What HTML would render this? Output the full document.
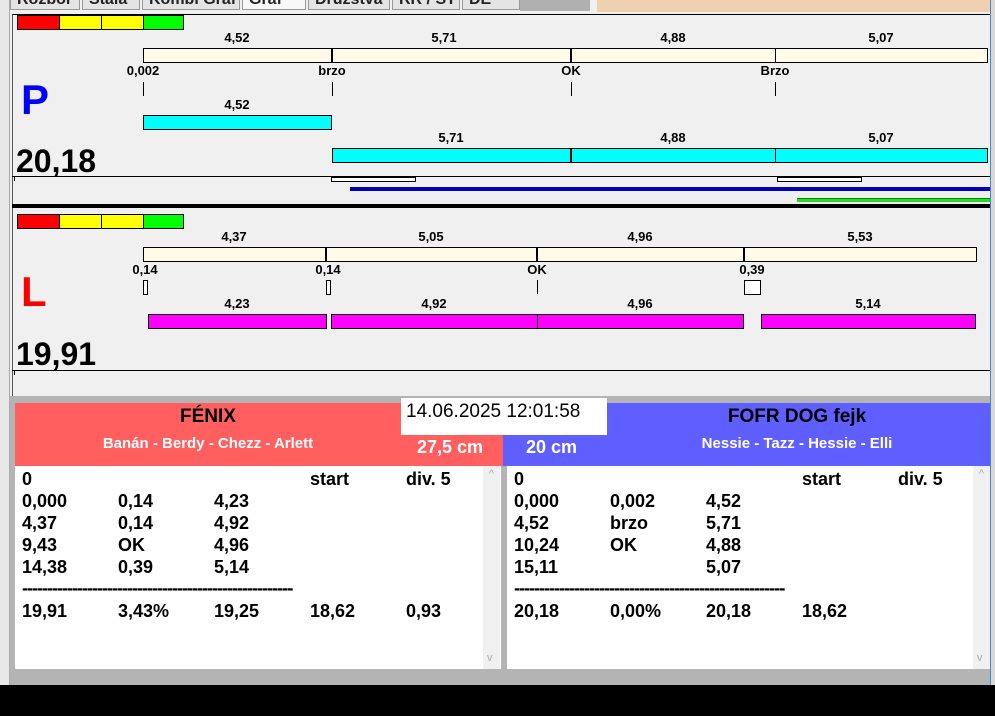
<!DOCTYPE html>
<html><head><meta charset="utf-8"><style>
body{margin:0;width:995px;height:716px;overflow:hidden;background:#f0f0f0;font-family:"Liberation Sans",Arial,sans-serif;position:relative}
div,span{position:absolute;box-sizing:border-box}
.t{font-weight:bold;font-size:13px;color:#000;transform:translateX(-50%);white-space:nowrap;line-height:14px}
.bar{border:1px solid #000}
.cr{background:#fffbe6}
.cy{background:#00ffff}
.mg{background:#ff00ff}
.vl{width:1px;background:#000}
.vl2{width:2px;background:#000}
.tab{top:-10px;height:20px;border:1px solid #999;background:#e4e4e4;font-size:16px;font-weight:bold;color:#222;padding:0 6px;line-height:18px;white-space:nowrap;overflow:hidden}
.row{font-weight:bold;font-size:18px;line-height:20px;color:#000;white-space:nowrap}
.dash{width:271px;overflow:hidden;letter-spacing:-1px}
</style></head><body>
<div style="left:0;top:0;width:10px;height:690px;background:#e8e8e8;border-right:1px solid #aaa"></div>
<div style="left:597px;top:0;width:393px;height:12px;background:#efd0b0"></div>
<div style="left:520px;top:0;width:70px;height:11px;background:#b0b0b0"></div>
<div class="tab" style="left:10px;width:70px">Rozbor</div>
<div class="tab" style="left:82px;width:58px">Stála</div>
<div class="tab" style="left:142px;width:98px">Kombi Graf</div>
<div class="tab" style="left:242px;width:64px;background:#f8f8f8">Graf</div>
<div class="tab" style="left:308px;width:82px">Družstva</div>
<div class="tab" style="left:392px;width:68px">RR / ST</div>
<div class="tab" style="left:462px;width:58px">DE</div>
<div style="left:12px;top:14px;width:978px;height:384px;border-top:1px solid #000;border-left:1px solid #555;background:#f0f0f0"></div>
<div style="left:990px;top:0;width:5px;height:690px;background:#d8d8d8;border-left:1px solid #3a8ad0"></div>

<!-- P section -->
<div class="bar" style="left:17px;top:15px;width:43px;height:15px;background:#f00"></div>
<div class="bar" style="left:59px;top:15px;width:43px;height:15px;background:#ff0"></div>
<div class="bar" style="left:101px;top:15px;width:43px;height:15px;background:#ff0"></div>
<div class="bar" style="left:143px;top:15px;width:41px;height:15px;background:#0f0"></div>
<div class="t" style="left:237px;top:31px">4,52</div><div class="t" style="left:444px;top:31px">5,71</div><div class="t" style="left:673px;top:31px">4,88</div><div class="t" style="left:881px;top:31px">5,07</div>
<div class="bar cr" style="left:143px;top:48px;width:845px;height:15px"></div>
<div class="vl2" style="left:331px;top:48px;height:15px"></div><div class="vl2" style="left:570px;top:48px;height:15px"></div><div class="vl" style="left:775px;top:48px;height:15px"></div>
<div class="t" style="left:143px;top:64px">0,002</div><div class="t" style="left:332px;top:64px">brzo</div><div class="t" style="left:571px;top:64px">OK</div><div class="t" style="left:775px;top:64px">Brzo</div>
<div class="vl" style="left:143px;top:82px;height:14px"></div><div class="vl" style="left:332px;top:82px;height:14px"></div><div class="vl" style="left:571px;top:82px;height:14px"></div><div class="vl" style="left:775px;top:82px;height:14px"></div>
<div style="left:21px;top:76px;font-size:42px;font-weight:bold;color:#0000ff;line-height:48px">P</div>
<div class="t" style="left:237px;top:98px">4,52</div>
<div class="bar cy" style="left:143px;top:115px;width:189px;height:15px"></div>
<div class="t" style="left:451px;top:131px">5,71</div><div class="t" style="left:673px;top:131px">4,88</div><div class="t" style="left:881px;top:131px">5,07</div>
<div class="bar cy" style="left:332px;top:148px;width:656px;height:15px"></div>
<div class="vl2" style="left:570px;top:148px;height:15px"></div><div class="vl" style="left:775px;top:148px;height:15px"></div>
<div style="left:16px;top:143px;font-size:32px;font-weight:bold;line-height:36px">20,18</div>
<div style="left:12px;top:176px;width:978px;height:1px;background:#000"></div>
<div class="vl" style="left:14px;top:177px;height:4px"></div>
<div class="bar" style="left:331px;top:177px;width:85px;height:5px;background:#fff"></div>
<div class="bar" style="left:777px;top:177px;width:85px;height:5px;background:#fff"></div>
<div style="left:350px;top:187px;width:640px;height:4px;background:#0000b8"></div>
<div style="left:797px;top:198px;width:193px;height:4px;background:#22dd22;border-top:1px solid #080"></div>
<div style="left:12px;top:204px;width:978px;height:4px;background:#000"></div>

<!-- L section -->
<div class="bar" style="left:17px;top:214px;width:43px;height:15px;background:#f00"></div>
<div class="bar" style="left:59px;top:214px;width:43px;height:15px;background:#ff0"></div>
<div class="bar" style="left:101px;top:214px;width:43px;height:15px;background:#ff0"></div>
<div class="bar" style="left:143px;top:214px;width:41px;height:15px;background:#0f0"></div>
<div class="t" style="left:234px;top:230px">4,37</div><div class="t" style="left:431px;top:230px">5,05</div><div class="t" style="left:640px;top:230px">4,96</div><div class="t" style="left:860px;top:230px">5,53</div>
<div class="bar cr" style="left:143px;top:247px;width:834px;height:15px"></div>
<div class="vl2" style="left:325px;top:247px;height:15px"></div><div class="vl2" style="left:536px;top:247px;height:15px"></div><div class="vl2" style="left:743px;top:247px;height:15px"></div>
<div class="t" style="left:145px;top:263px">0,14</div><div class="t" style="left:328px;top:263px">0,14</div><div class="t" style="left:537px;top:263px">OK</div><div class="t" style="left:752px;top:263px">0,39</div>
<div class="bar" style="left:143px;top:280px;width:5px;height:15px;background:#fff"></div>
<div class="bar" style="left:326px;top:280px;width:5px;height:15px;background:#fff"></div>
<div class="vl" style="left:537px;top:280px;height:14px"></div>
<div class="bar" style="left:744px;top:280px;width:17px;height:15px;background:#fff"></div>
<div style="left:21px;top:268px;font-size:42px;font-weight:bold;color:#f00;line-height:48px">L</div>
<div class="t" style="left:237px;top:297px">4,23</div><div class="t" style="left:434px;top:297px">4,92</div><div class="t" style="left:640px;top:297px">4,96</div><div class="t" style="left:868px;top:297px">5,14</div>
<div class="bar mg" style="left:148px;top:314px;width:179px;height:15px"></div>
<div class="bar mg" style="left:331px;top:314px;width:413px;height:15px"></div>
<div class="vl" style="left:537px;top:314px;height:15px"></div>
<div class="bar mg" style="left:761px;top:314px;width:215px;height:15px"></div>
<div style="left:16px;top:336px;font-size:32px;font-weight:bold;line-height:36px">19,91</div>
<div style="left:12px;top:370px;width:978px;height:1px;background:#000"></div>
<div class="vl" style="left:14px;top:371px;height:4px"></div>

<!-- bottom -->
<div style="left:10px;top:396px;width:980px;height:290px;background:#b4b4b4"></div>
<div style="left:15px;top:403px;width:488px;height:63px;background:#ff5f5f"></div>
<div style="left:503px;top:403px;width:487px;height:63px;background:#5f5fff"></div>
<div style="left:401px;top:398px;width:206px;height:37px;background:#fff;font-size:19px;line-height:28px;padding-left:5px">14.06.2025 12:01:58</div>
<div style="left:208px;top:405px;transform:translateX(-50%);font-size:19px;font-weight:bold;line-height:24px">FÉNIX</div>
<div style="left:208px;top:434px;transform:translateX(-50%);font-size:15px;font-weight:bold;color:#fff;white-space:nowrap;line-height:20px">Banán - Berdy - Chezz - Arlett</div>
<div style="left:797px;top:405px;transform:translateX(-50%);font-size:19px;font-weight:bold;line-height:24px;white-space:nowrap">FOFR DOG fejk</div>
<div style="left:797px;top:434px;transform:translateX(-50%);font-size:15px;font-weight:bold;color:#fff;white-space:nowrap;line-height:20px">Nessie - Tazz - Hessie - Elli</div>
<div style="left:417px;top:436px;font-size:18px;font-weight:bold;color:#fff;line-height:22px">27,5 cm</div>
<div style="left:526px;top:436px;font-size:18px;font-weight:bold;color:#fff;line-height:22px">20 cm</div>

<div style="left:15px;top:466px;width:486px;height:203px;background:#fff"></div>
<div style="left:483px;top:466px;width:17px;height:203px;background:#f0f0f0;color:#aaa;font-size:11px;text-align:center;line-height:16px">^<br><span style="position:absolute;left:4px;top:184px">v</span></div>
<div style="left:507px;top:466px;width:483px;height:203px;background:#fff"></div>
<div style="left:973px;top:466px;width:17px;height:203px;background:#f0f0f0;color:#aaa;font-size:11px;text-align:center;line-height:16px">^<br><span style="position:absolute;left:4px;top:184px">v</span></div>

<div class="row" style="left:22px;top:469px">0</div><div class="row" style="left:310px;top:469px">start</div><div class="row" style="left:406px;top:469px">div. 5</div>
<div class="row" style="left:22px;top:491px">0,000</div><div class="row" style="left:118px;top:491px">0,14</div><div class="row" style="left:214px;top:491px">4,23</div>
<div class="row" style="left:22px;top:513px">4,37</div><div class="row" style="left:118px;top:513px">0,14</div><div class="row" style="left:214px;top:513px">4,92</div>
<div class="row" style="left:22px;top:535px">9,43</div><div class="row" style="left:118px;top:535px">OK</div><div class="row" style="left:214px;top:535px">4,96</div>
<div class="row" style="left:22px;top:557px">14,38</div><div class="row" style="left:118px;top:557px">0,39</div><div class="row" style="left:214px;top:557px">5,14</div>
<div class="row dash" style="left:22px;top:578px">------------------------------------------------------------------------</div>
<div class="row" style="left:22px;top:601px">19,91</div><div class="row" style="left:118px;top:601px">3,43%</div><div class="row" style="left:214px;top:601px">19,25</div><div class="row" style="left:310px;top:601px">18,62</div><div class="row" style="left:406px;top:601px">0,93</div>

<div class="row" style="left:514px;top:469px">0</div><div class="row" style="left:802px;top:469px">start</div><div class="row" style="left:898px;top:469px">div. 5</div>
<div class="row" style="left:514px;top:491px">0,000</div><div class="row" style="left:610px;top:491px">0,002</div><div class="row" style="left:706px;top:491px">4,52</div>
<div class="row" style="left:514px;top:513px">4,52</div><div class="row" style="left:610px;top:513px">brzo</div><div class="row" style="left:706px;top:513px">5,71</div>
<div class="row" style="left:514px;top:535px">10,24</div><div class="row" style="left:610px;top:535px">OK</div><div class="row" style="left:706px;top:535px">4,88</div>
<div class="row" style="left:514px;top:557px">15,11</div><div class="row" style="left:706px;top:557px">5,07</div>
<div class="row dash" style="left:514px;top:578px">------------------------------------------------------------------------</div>
<div class="row" style="left:514px;top:601px">20,18</div><div class="row" style="left:610px;top:601px">0,00%</div><div class="row" style="left:706px;top:601px">20,18</div><div class="row" style="left:802px;top:601px">18,62</div>

<div style="left:0;top:685px;width:995px;height:31px;background:#000"></div>
</body></html>
